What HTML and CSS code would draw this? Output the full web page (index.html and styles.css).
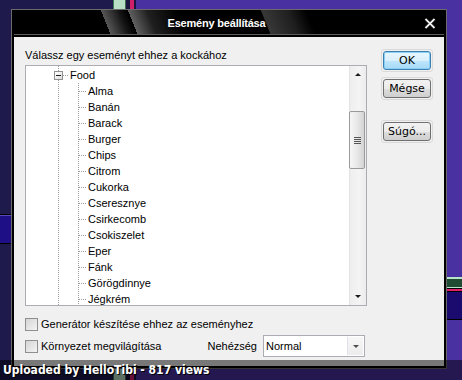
FILE: index.html
```html
<!DOCTYPE html>
<html lang="hu">
<head>
<meta charset="utf-8">
<title>Esemény beállítása</title>
<link rel="stylesheet" href="styles.css">
</head>
<body>
<div class="desktop">
  <div class="window">
    <div class="titlebar">
      <span class="title">Esemény beállítása</span>
      <span class="close" aria-label="Bezárás">
        <svg width="12" height="11" viewBox="0 0 12 11"><path d="M1.5 1 L10.5 10 M10.5 1 L1.5 10" stroke="#3a3a3a" stroke-width="3" fill="none"/><path d="M1.5 1 L10.5 10 M10.5 1 L1.5 10" stroke="#fff" stroke-width="1.6" fill="none"/></svg>
      </span>
    </div>
    <div class="client">
      <div class="main">
        <div class="prompt">Válassz egy eseményt ehhez a kockához</div>
        <div class="tree">
          <div class="tree-view">
            <div class="root"><span class="expander"></span><span class="connector"></span><span class="node-label">Food</span></div>
            <ul class="children">
              <li>Alma</li>
              <li>Banán</li>
              <li>Barack</li>
              <li>Burger</li>
              <li>Chips</li>
              <li>Citrom</li>
              <li>Cukorka</li>
              <li>Cseresznye</li>
              <li>Csirkecomb</li>
              <li>Csokiszelet</li>
              <li>Eper</li>
              <li>Fánk</li>
              <li>Görögdinnye</li>
              <li>Jégkrém</li>
            </ul>
          </div>
          <div class="scrollbar">
            <span class="sb-btn"><span class="arrow-up"></span></span>
            <span class="sb-gap-top"></span>
            <span class="thumb"><span class="grip"></span></span>
            <span class="sb-gap"></span>
            <span class="sb-btn"><span class="arrow-down"></span></span>
          </div>
        </div>
        <label class="check first"><span class="box"></span>Generátor készítése ehhez az eseményhez</label>
        <div class="bottom-row">
          <label class="check"><span class="box"></span>Környezet megvilágítása</label>
          <span class="field-label">Nehézség</span>
          <div class="combo"><span class="value">Normal</span><span class="drop"><span class="arrow-down small"></span></span></div>
        </div>
      </div>
      <div class="buttons">
        <span class="btn-frame"><button class="btn default">OK</button></span>
        <span class="btn-frame"><button class="btn">Mégse</button></span>
        <span class="btn-frame help"><button class="btn">Súgó...</button></span>
      </div>
    </div>
  </div>
  <div class="upload-bar">Uploaded by HelloTibi - 817 views</div>
</div>
</body>
</html>
```
FILE: styles.css
```css
* { box-sizing: border-box; margin: 0; padding: 0; }

body {
  margin: 0;
  background: #1f1a4c;
  font-family: "Liberation Sans", Arial, sans-serif;
  font-size: 11px;
  color: #000;
}

.desktop {
  position: relative;
  width: 462px;
  height: 380px;
  overflow: hidden;
  background:
    linear-gradient(to bottom, #000 0 1px, #5a4ab8 1px 2px, #1f0f86 2px 29px, #000 29px 30px) 0 214px / 11px 30px no-repeat,
    linear-gradient(to bottom, #b9e3c9 0 2px, #1e4b31 2px 10px, #b9e3c9 10px 11px, #000 11px 12px, #e0206a 12px 14px, #000 14px 15px, #1b0b6e 15px 42px, #000 42px 43px) 447px 277px / 15px 43px no-repeat,
    linear-gradient(to right, #1f1a4c 0 113px, #3e7a58 113px 114px, #b7dfc6 114px 125px, #3e6a50 125px 126px, #1a1540 126px 130px, #d0206a 130px 134px, #1a1540 134px 136px, #4a31a2 136px);
}

.window {
  position: absolute;
  left: 11px;
  top: 9px;
  width: 436px;
  height: 360px;
  border: 1px solid #6b6b6b;
  background: #000;
  padding: 0 2px 2px;
  display: flex;
  flex-direction: column;
}

.titlebar {
  position: relative;
  height: 25px;
  border-bottom: 1px solid #5c5c5c;
  margin-bottom: 2px;
  display: flex;
  align-items: center;
  overflow: hidden;
  flex: none;
}

.titlebar::before {
  content: "";
  position: absolute;
  left: 88px;
  top: -2px;
  width: 85px;
  height: 30px;
  transform: skewX(22deg);
  background:
    linear-gradient(to right, transparent 0 4px, rgba(255,255,255,0.34) 4px, rgba(255,255,255,0.08) 22px, transparent 30px),
    linear-gradient(to right, transparent 0 31px, rgba(255,255,255,0.38) 31px, rgba(255,255,255,0.12) 50px, transparent 80px);
}

.titlebar::after {
  content: "";
  position: absolute;
  left: 252px;
  top: -2px;
  width: 45px;
  height: 30px;
  transform: skewX(22deg);
  background: linear-gradient(to right, rgba(255,255,255,0.22), rgba(255,255,255,0.12) 60%, transparent);
}

.title {
  position: relative;
  z-index: 1;
  flex: 1;
  text-align: center;
  color: #fff;
  font-weight: bold;
  font-size: 11px;
  letter-spacing: -0.2px;
  padding-top: 2px;
  text-shadow: 0 0 3px #000;
}

.close {
  position: relative;
  z-index: 1;
  width: 25px;
  height: 24px;
  display: flex;
  align-items: center;
  padding-left: 5px;
  padding-top: 2px;
}

.close svg { display: block; }

.client {
  flex: 1;
  background: #f0f0f0;
  display: flex;
  padding: 12px 11px 0 11px;
}

.main {
  width: 342px;
  display: flex;
  flex-direction: column;
}

.prompt {
  line-height: 13px;
  height: 13px;
  padding-left: 0;
}

.tree {
  margin-top: 3px;
  height: 241px;
  border: 1px solid #abadb3;
  background: #fff;
  display: flex;
}

.tree-view {
  flex: 1;
  overflow: hidden;
  padding-top: 1px;
  background: repeating-linear-gradient(to bottom, #a0a0a0 0 1px, transparent 1px 2px) 32px 0 / 1px 100% no-repeat;
}

.root {
  height: 16px;
  display: flex;
  align-items: center;
  padding-left: 28px;
}

.expander {
  width: 9px;
  height: 9px;
  border: 1px solid #919191;
  background: linear-gradient(135deg, #fff 0%, #f0f0f0 50%, #d8d8d8 100%);
  position: relative;
}

.expander::after {
  content: "";
  position: absolute;
  left: 1px;
  top: 3px;
  width: 5px;
  height: 1px;
  background: #1a1a1a;
}

.connector {
  width: 5px;
  height: 1px;
  background: repeating-linear-gradient(to right, #a0a0a0 0 1px, transparent 1px 2px);
}

.node-label {
  margin-left: 2px;
  line-height: 16px;
}

.children {
  list-style: none;
  background: repeating-linear-gradient(to bottom, #a0a0a0 0 1px, transparent 1px 2px) 52px 0 / 1px 100% no-repeat;
}

.children li {
  position: relative;
  height: 16px;
  line-height: 16px;
  padding-left: 62px;
}

.children li::before {
  content: "";
  position: absolute;
  left: 53px;
  top: 8px;
  width: 8px;
  height: 1px;
  background: repeating-linear-gradient(to right, #a0a0a0 0 1px, transparent 1px 2px);
}

.scrollbar {
  width: 17px;
  display: flex;
  flex-direction: column;
  background: linear-gradient(to right, #e2e2e2 0 1px, #eeeeee 1px, #f4f4f4 60%, #ececec);
}

.sb-btn {
  height: 17px;
  display: flex;
  align-items: center;
  justify-content: center;
  flex: none;
}

.arrow-up {
  width: 0;
  height: 0;
  border-left: 3px solid transparent;
  border-right: 3px solid transparent;
  border-bottom: 3px solid #1a1a1a;
}

.arrow-down {
  width: 0;
  height: 0;
  border-left: 3px solid transparent;
  border-right: 3px solid transparent;
  border-top: 3px solid #1a1a1a;
}

.arrow-down.small { border-top-color: #4d4d4d; }

.sb-gap-top { height: 28px; flex: none; }
.sb-gap { flex: 1; }

.thumb {
  height: 58px;
  margin: 0 1px 0 0;
  border: 1px solid #9a9a9a;
  border-radius: 2px;
  background: linear-gradient(to right, #f6f6f6, #e8e8e8 50%, #d4d4d4);
  display: flex;
  align-items: center;
  justify-content: center;
  flex: none;
}

.grip {
  width: 7px;
  height: 7px;
  background: repeating-linear-gradient(to bottom, #555 0 1px, transparent 1px 2px);
}

.check {
  display: flex;
  align-items: center;
  height: 13px;
  line-height: 13px;
  white-space: nowrap;
}

.check.first { margin-top: 12px; }

.box {
  width: 13px;
  height: 13px;
  border: 1px solid #8f8f8f;
  background: linear-gradient(135deg, #d4d4d4, #f4f4f4);
  margin-right: 3px;
  flex: none;
}

.bottom-row {
  margin-top: 4px;
  height: 22px;
  display: flex;
  align-items: center;
}

.field-label {
  margin-left: auto;
  margin-right: 6px;
}

.combo {
  width: 102px;
  height: 22px;
  margin-right: 2px;
  border: 1px solid #abadb3;
  background: #fff;
  display: flex;
  align-items: center;
}

.combo .value {
  flex: 1;
  padding-left: 2px;
}

.drop {
  width: 16px;
  height: 18px;
  margin-right: 1px;
  border-left: 1px solid #e2e3ea;
  background: linear-gradient(to bottom, #f7f7f7, #ececec);
  display: flex;
  align-items: center;
  justify-content: center;
}

.buttons {
  margin-left: 14px;
  width: 52px;
  display: flex;
  flex-direction: column;
}

.btn-frame {
  display: block;
  padding: 1px;
  border: 1px solid #dadada;
  border-radius: 3px;
  margin-bottom: 5px;
}

.btn-frame.help { margin-top: 15px; }

.btn {
  display: block;
  width: 48px;
  height: 19px;
  border: 1px solid #707070;
  border-radius: 3px;
  background: linear-gradient(to bottom, #f2f2f2 0%, #ebebeb 50%, #dddddd 51%, #cfcfcf 100%);
  font-family: "DejaVu Sans", sans-serif;
  font-size: 11px;
  color: #000;
  line-height: 17px;
}

.btn.default {
  border-color: #3c7fb1;
  background: linear-gradient(to bottom, #eaf6fd 0%, #d9f0fc 50%, #bee6fd 51%, #a7d9f5 100%);
  box-shadow: inset 0 0 0 1px #8ad0f4;
}

.upload-bar {
  position: absolute;
  left: 0;
  bottom: 0;
  width: 462px;
  height: 20px;
  background: rgba(0, 0, 0, 0.5);
  color: #fff;
  font-family: "DejaVu Sans Condensed", "DejaVu Sans", sans-serif;
  font-stretch: condensed;
  font-weight: bold;
  font-size: 12px;
  line-height: 20px;
  padding-left: 3px;
  text-shadow: 1px 1px 0 #000;
}
```
